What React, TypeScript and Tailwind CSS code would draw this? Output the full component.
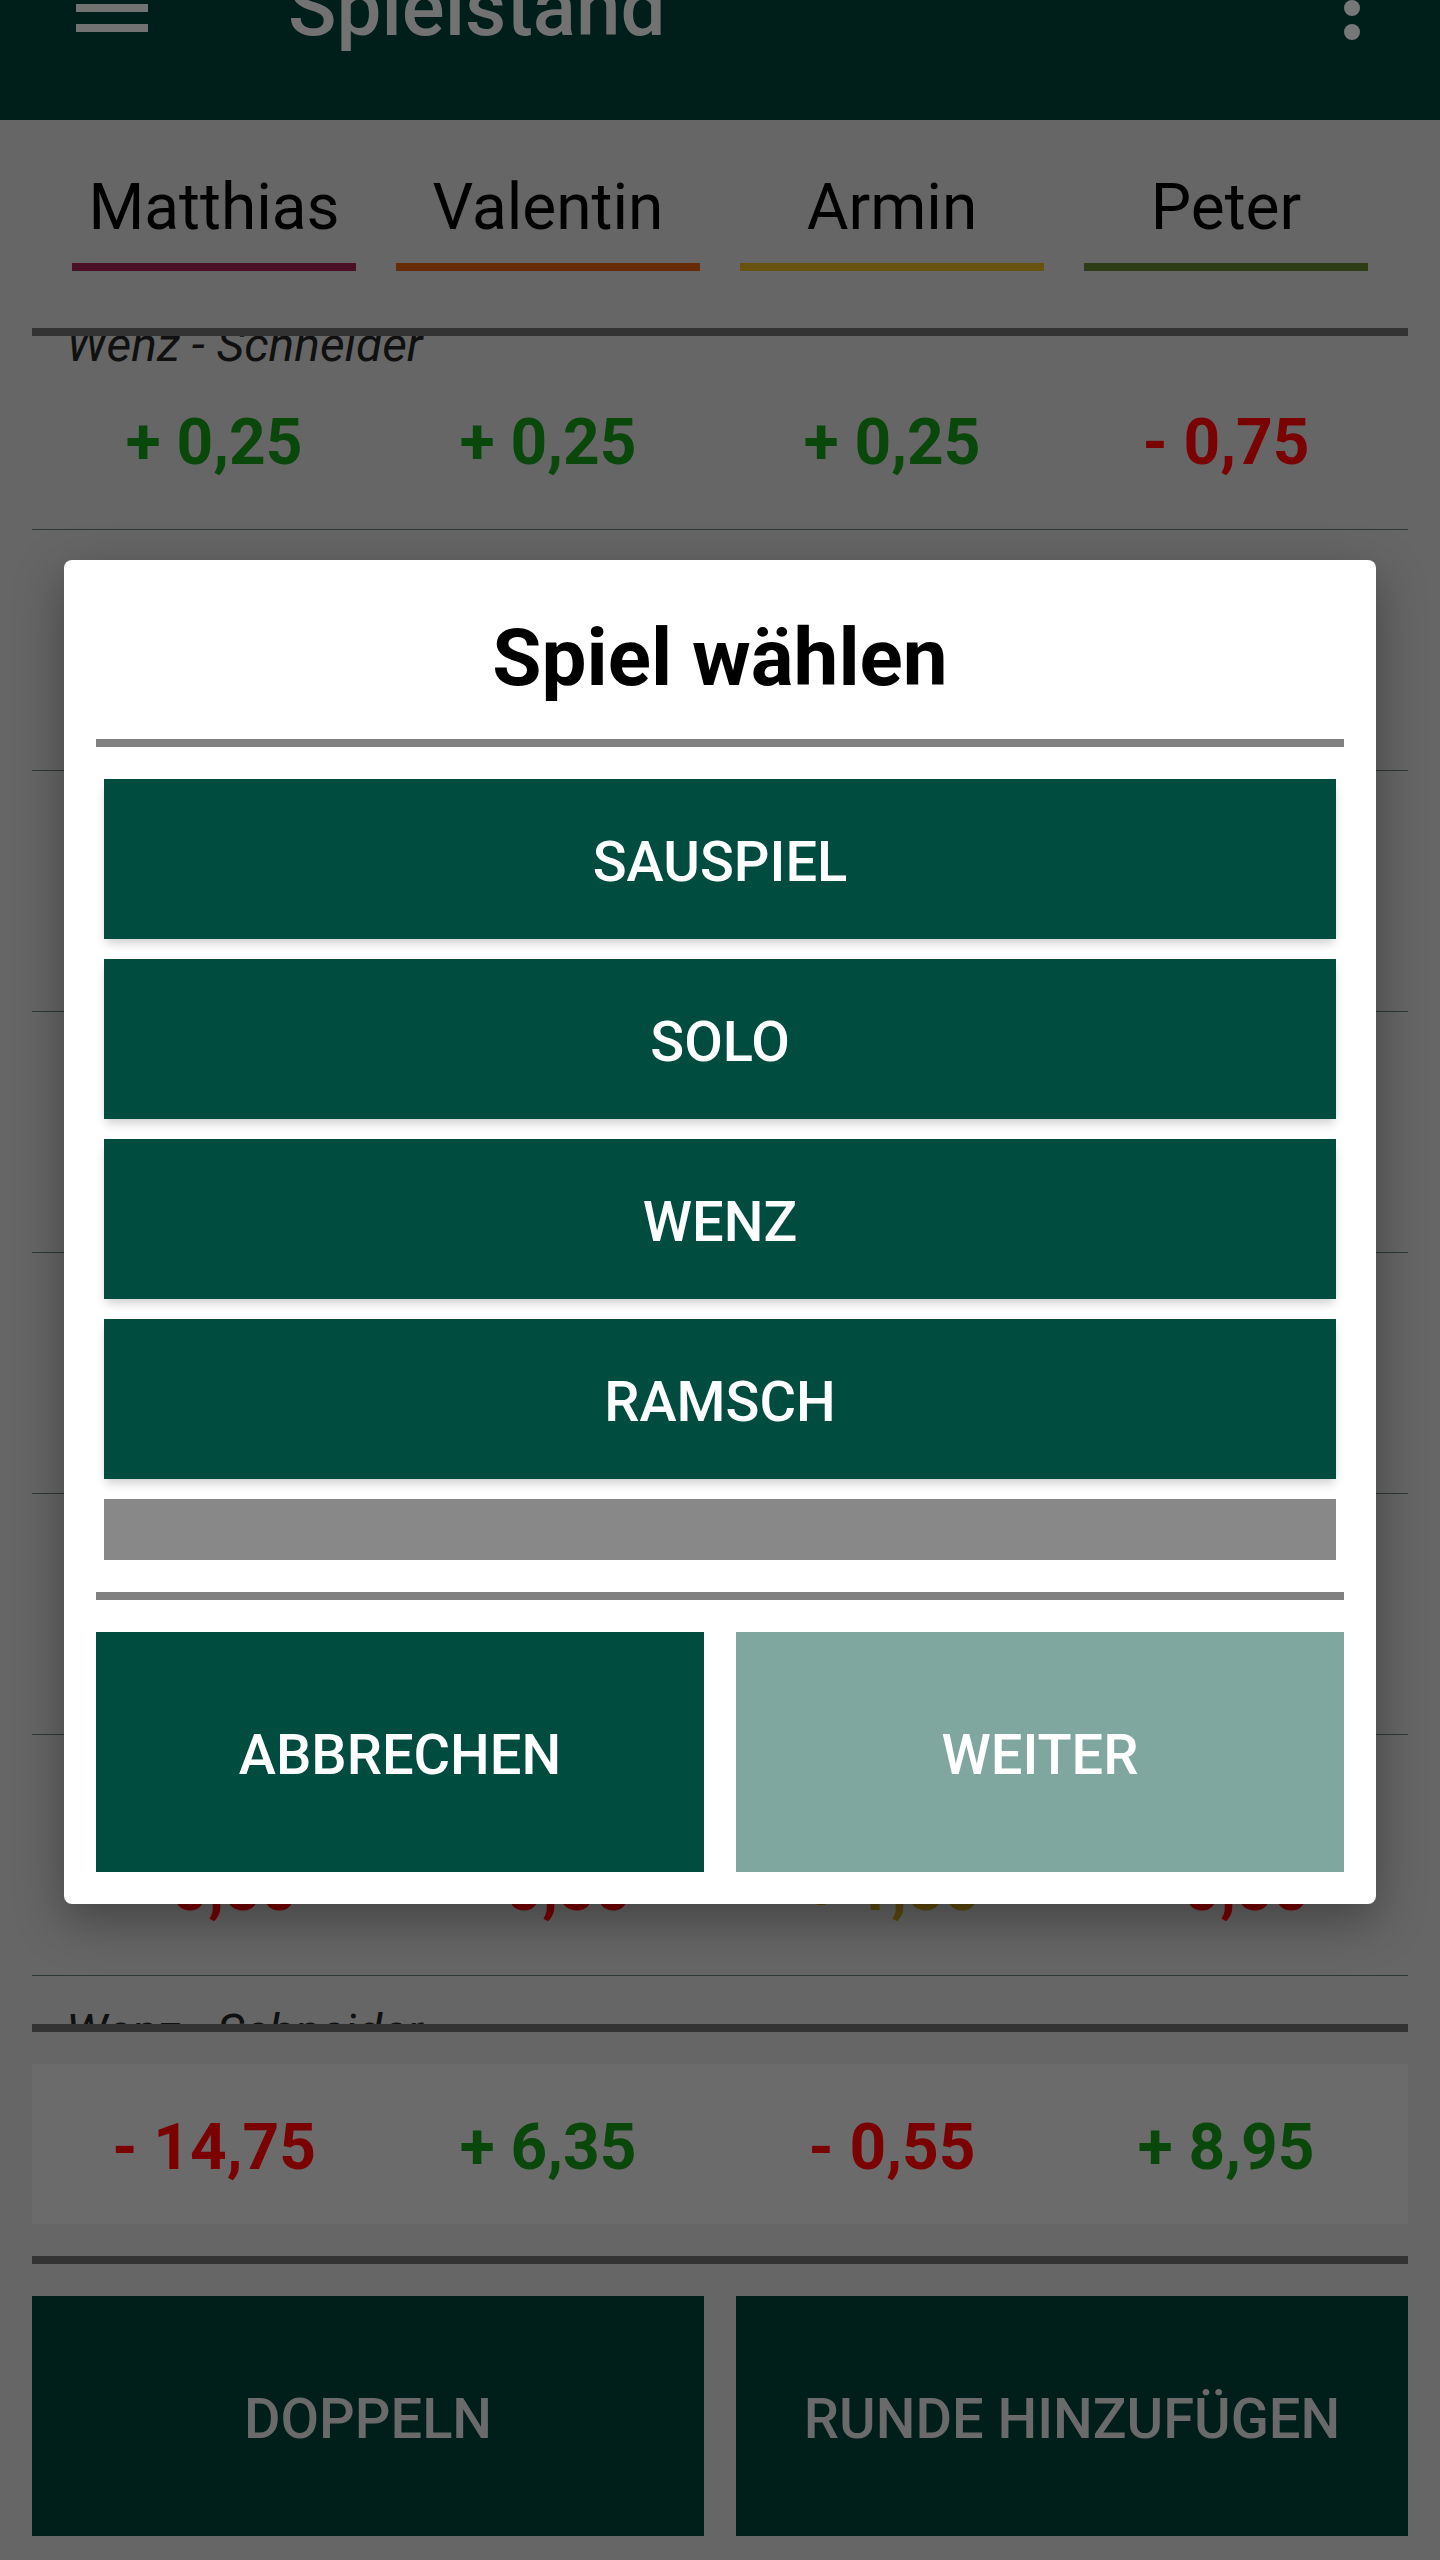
import React from "react";

type Cell = { text: string; color: string };

const G = "#0a470a";
const R = "#7a0202";
const O = "#5e4a0c";

const colMargins = ["ml-[40px] mr-[20px]", "mx-[20px]", "mx-[20px]", "ml-[20px] mr-[40px]"];

function Cols({ cells, className = "" }: { cells: React.ReactNode[]; className?: string }) {
  return (
    <div className={"grid grid-cols-4 " + className}>
      {cells.map((c, i) => (
        <div key={i} className={"flex flex-col items-stretch " + colMargins[i]}>
          {c}
        </div>
      ))}
    </div>
  );
}

function Num({ cell }: { cell: Cell }) {
  return (
    <span className="block text-center text-[64px] leading-[75px] font-bold whitespace-nowrap" style={{ color: cell.color }}>
      {cell.text}
    </span>
  );
}

const rows: Cell[][] = [
  [
    { text: "+ 0,25", color: G },
    { text: "+ 0,25", color: G },
    { text: "+ 0,25", color: G },
    { text: "- 0,75", color: R },
  ],
  [
    { text: "- 1,50", color: R },
    { text: "+ 0,50", color: G },
    { text: "+ 0,50", color: G },
    { text: "+ 0,50", color: G },
  ],
  [
    { text: "- 0,50", color: R },
    { text: "+ 1,50", color: G },
    { text: "- 0,50", color: R },
    { text: "- 0,50", color: R },
  ],
  [
    { text: "- 2,25", color: R },
    { text: "+ 0,75", color: G },
    { text: "+ 0,75", color: G },
    { text: "+ 0,75", color: G },
  ],
  [
    { text: "- 1,00", color: R },
    { text: "+ 1,00", color: G },
    { text: "- 1,00", color: R },
    { text: "+ 1,00", color: G },
  ],
  [
    { text: "- 0,25", color: R },
    { text: "- 0,25", color: R },
    { text: "- 0,25", color: R },
    { text: "+ 0,75", color: G },
  ],
  [
    { text: "- 0,50", color: R },
    { text: "- 0,50", color: R },
    { text: "+ 1,50", color: O },
    { text: "- 0,50", color: R },
  ],
];

const totals: Cell[] = [
  { text: "- 14,75", color: R },
  { text: "+ 6,35", color: G },
  { text: "- 0,55", color: R },
  { text: "+ 8,95", color: G },
];

const players = [
  { name: "Matthias", color: "#4a1026" },
  { name: "Valentin", color: "#672b08" },
  { name: "Armin", color: "#675210" },
  { name: "Peter", color: "#2f3d16" },
];

export default function App() {
  return (
    <div className="relative w-[1440px] h-[2560px] overflow-hidden bg-[#666666] font-['Roboto',sans-serif]">
      {/* App bar (partially scrolled off) */}
      <header className="h-[120px] overflow-hidden bg-[#001f1a]">
        <div className="-mt-[104px] flex h-[224px] items-center">
          <div className="ml-[64px] flex h-[96px] w-[96px] items-center justify-center">
            <svg width="96" height="96" viewBox="0 0 24 24" fill="#727272">
              <path d="M3 18h18v-2H3v2zm0-5h18v-2H3v2zm0-7v2h18V6H3z" />
            </svg>
          </div>
          <span className="ml-[128px] text-[80px] font-medium leading-[94px] text-[#727272]">Spielstand</span>
          <div className="flex-1" />
          <div className="mr-[40px] flex h-[96px] w-[96px] items-center justify-center">
            <svg width="96" height="96" viewBox="0 0 24 24" fill="#777777">
              <circle cx="12" cy="6" r="2" />
              <circle cx="12" cy="12" r="2" />
              <circle cx="12" cy="18" r="2" />
            </svg>
          </div>
        </div>
      </header>

      {/* Player tabs */}
      <div className="h-[208px] px-[32px] pt-[50px]">
        <Cols
          cells={players.map((p) => (
            <>
              <span className="block text-center text-[64px] leading-[75px] text-black">{p.name}</span>
              <div className="mt-[18px] h-[8px]" style={{ backgroundColor: p.color }} />
            </>
          ))}
        />
      </div>

      <div className="mx-[32px] h-[8px] bg-[#333333]" />

      {/* Rounds list */}
      <div className="mx-[32px] h-[1688px] overflow-hidden">
        <div className="-mt-[47px]">
          {rows.map((r, i) => (
            <div key={i} className="h-[241px] border-b border-[#2e3836]">
              <div className="pl-[34px] pt-[28px] text-[48px] italic leading-[56px] text-[#101010]">Wenz - Schneider</div>
              <Cols className="mt-[32px]" cells={r.map((c, j) => <Num key={j} cell={c} />)} />
            </div>
          ))}
          <div className="h-[241px]">
            <div className="pl-[34px] pt-[28px] text-[48px] italic leading-[56px] text-[#101010]">Wenz - Schneider</div>
          </div>
        </div>
      </div>

      <div className="mx-[32px] h-[8px] bg-[#333333]" />

      {/* Totals */}
      <div className="mx-[32px] mt-[32px] flex h-[160px] items-center bg-[#6b6b6b] pt-[6px]">
        <Cols className="w-full" cells={totals.map((c, j) => <Num key={j} cell={c} />)} />
      </div>

      <div className="mx-[32px] mt-[32px] h-[8px] bg-[#333333]" />

      {/* Bottom buttons */}
      <div className="mx-[32px] mt-[32px] grid h-[240px] grid-cols-2 gap-[32px]">
        <div className="flex items-center justify-center bg-[#001f1a] pt-[6px] text-[56px] font-medium text-[#6a6a6a]">DOPPELN</div>
        <div className="flex items-center justify-center bg-[#001f1a] pt-[6px] text-[56px] font-medium text-[#6a6a6a]">RUNDE HINZUFÜGEN</div>
      </div>

      {/* Dialog */}
      <div className="absolute left-[64px] top-[560px] w-[1312px] rounded-[8px] bg-white px-[32px] pb-[32px] shadow-[0_16px_48px_rgba(0,0,0,0.35)]">
        <div className="pt-[51px] text-center text-[80px] font-bold leading-[94px] text-black">Spiel wählen</div>
        <div className="mt-[34px] h-[8px] bg-[#808080]" />
        <div className="h-[813px] overflow-hidden">
          <div className="flex flex-col gap-[20px] px-[8px] pt-[32px]">
            {["SAUSPIEL", "SOLO", "WENZ", "RAMSCH"].map((t) => (
              <div
                key={t}
                className="flex h-[160px] items-center justify-center bg-[#004d40] pt-[6px] text-[56px] font-medium text-white shadow-[0_6px_10px_-2px_rgba(0,0,0,0.2)]"
              >
                {t}
              </div>
            ))}
            <div className="h-[160px] bg-[#888888]" />
          </div>
        </div>
        <div className="mt-[32px] h-[8px] bg-[#808080]" />
        <div className="mt-[32px] grid h-[240px] grid-cols-2 gap-[32px]">
          <div className="flex items-center justify-center bg-[#004d40] pt-[6px] text-[56px] font-medium text-white">ABBRECHEN</div>
          <div className="flex items-center justify-center bg-[#80a6a0] pt-[6px] text-[56px] font-medium text-white">WEITER</div>
        </div>
      </div>
    </div>
  );
}
